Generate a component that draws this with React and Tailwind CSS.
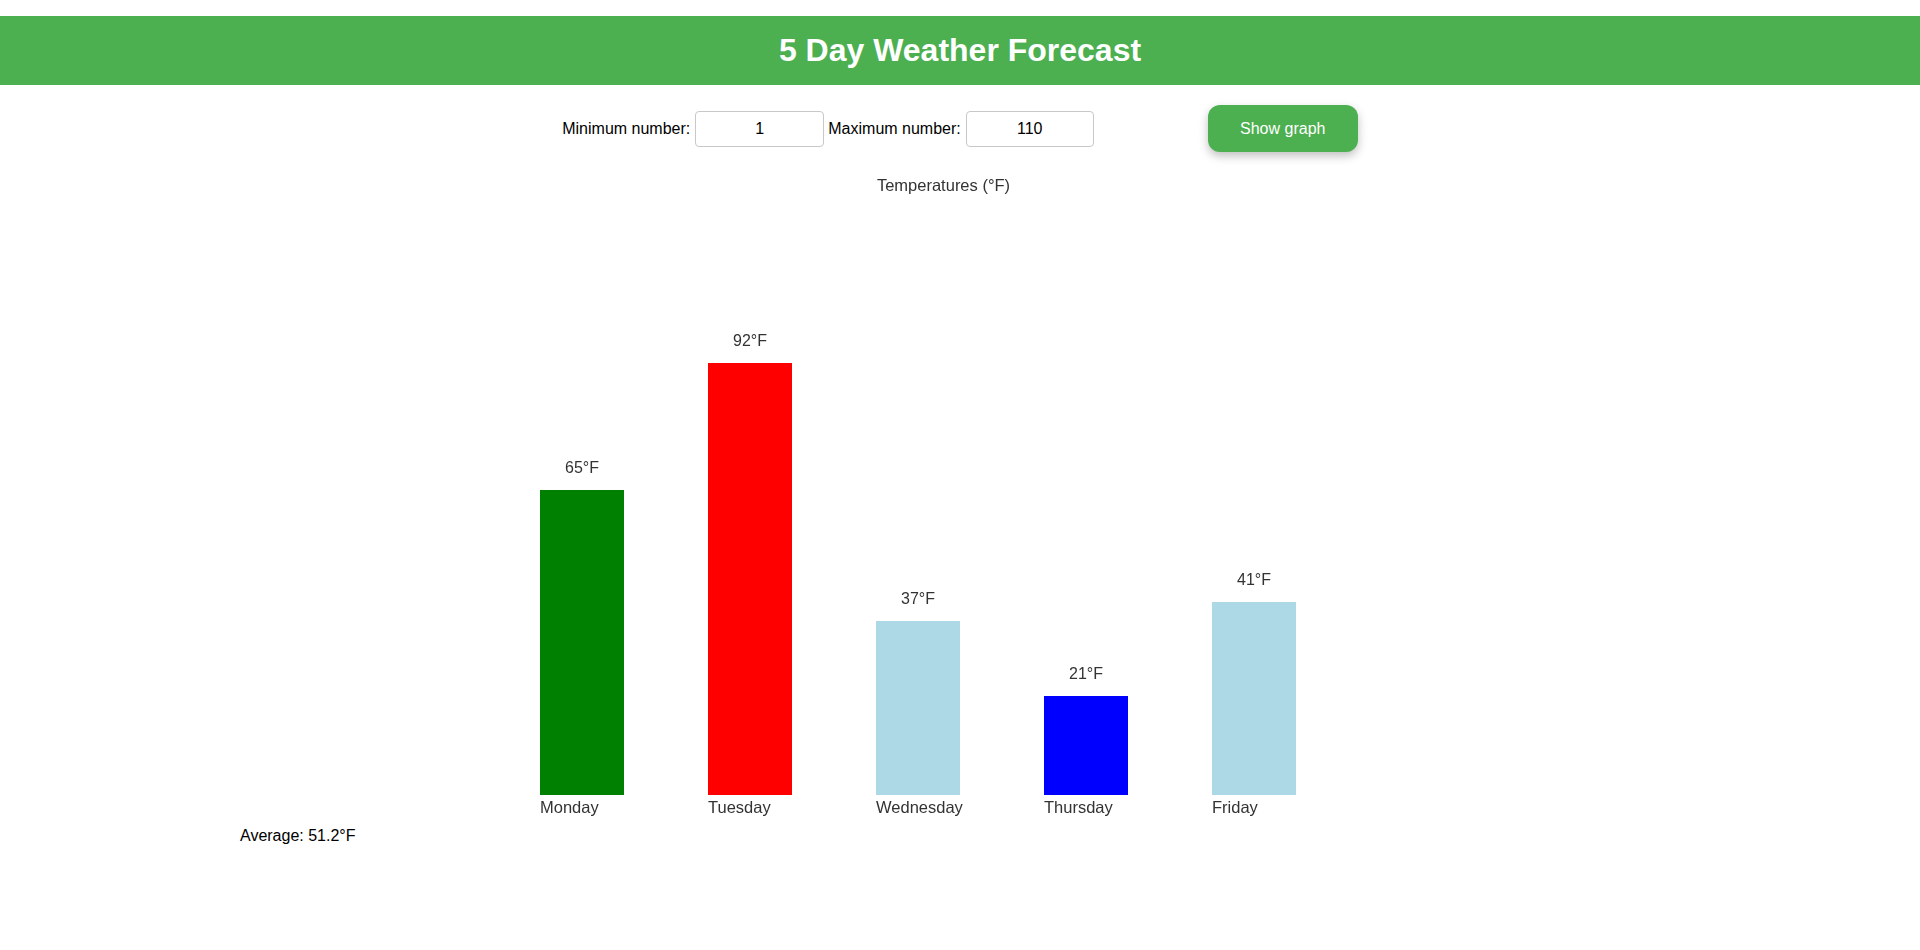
import React from 'react';

const days = [
  { name: 'Monday', temp: 65, color: 'bg-[#008000]' },
  { name: 'Tuesday', temp: 92, color: 'bg-[#ff0000]' },
  { name: 'Wednesday', temp: 37, color: 'bg-[#add8e6]' },
  { name: 'Thursday', temp: 21, color: 'bg-[#0000ff]' },
  { name: 'Friday', temp: 41, color: 'bg-[#add8e6]' },
];

// pixels per degree on the chart
const SCALE = 4.7;

export default function App() {
  const avg = days.reduce((s, d) => s + d.temp, 0) / days.length;

  return (
    <div className="min-h-[950px] bg-white text-black font-['Liberation_Sans',Arial,sans-serif] pt-[16px]">
      {/* Header */}
      <header className="bg-[#4CAF50] h-[69px] flex items-center justify-center">
        <h1 className="text-white text-[32px] font-bold leading-[37px]">5 Day Weather Forecast</h1>
      </header>

      {/* Controls */}
      <div className="mt-[20px] flex items-center justify-center text-[16px]">
        <label className="mr-[5px]">Minimum number:</label>
        <input
          type="text"
          defaultValue="1"
          className="w-[129px] h-[36px] border border-[#c8c8c8] rounded-[4px] text-center text-[16px] bg-white outline-none"
        />
        <label className="ml-[4px] mr-[5px]">Maximum number:</label>
        <input
          type="text"
          defaultValue="110"
          className="w-[128px] h-[36px] border border-[#c8c8c8] rounded-[4px] text-center text-[16px] bg-white outline-none"
        />
        <button className="ml-[114px] w-[150px] h-[47px] rounded-[12px] bg-[#4CAF50] text-white text-[16px] shadow-[0_4px_10px_rgba(0,0,0,0.25)]">
          Show graph
        </button>
      </div>

      {/* Chart */}
      <div className="ml-[540px] w-[807px] mt-[24px] text-[#333] blur-[0.35px]">
        <div className="text-center text-[16.5px] leading-[19px]">Temperatures (°F)</div>
        <div className="h-[600px] flex items-end gap-[84px]">
          {days.map((d) => (
            <div key={d.name} className="w-[84px] flex flex-col items-center">
              <span className="text-[16px] leading-[18px] mb-[13px]">{d.temp}°F</span>
              <div className={`w-[84px] ${d.color}`} style={{ height: d.temp * SCALE }} />
            </div>
          ))}
        </div>
        <div className="mt-[3px] flex gap-[84px]">
          {days.map((d) => (
            <span key={d.name} className="w-[84px] text-left text-[16.5px] leading-[18px] whitespace-nowrap">
              {d.name}
            </span>
          ))}
        </div>
      </div>

      {/* Average */}
      <div className="ml-[240px] mt-[11px] text-[16px] leading-[18px]">Average: {avg.toFixed(1)}°F</div>
    </div>
  );
}
